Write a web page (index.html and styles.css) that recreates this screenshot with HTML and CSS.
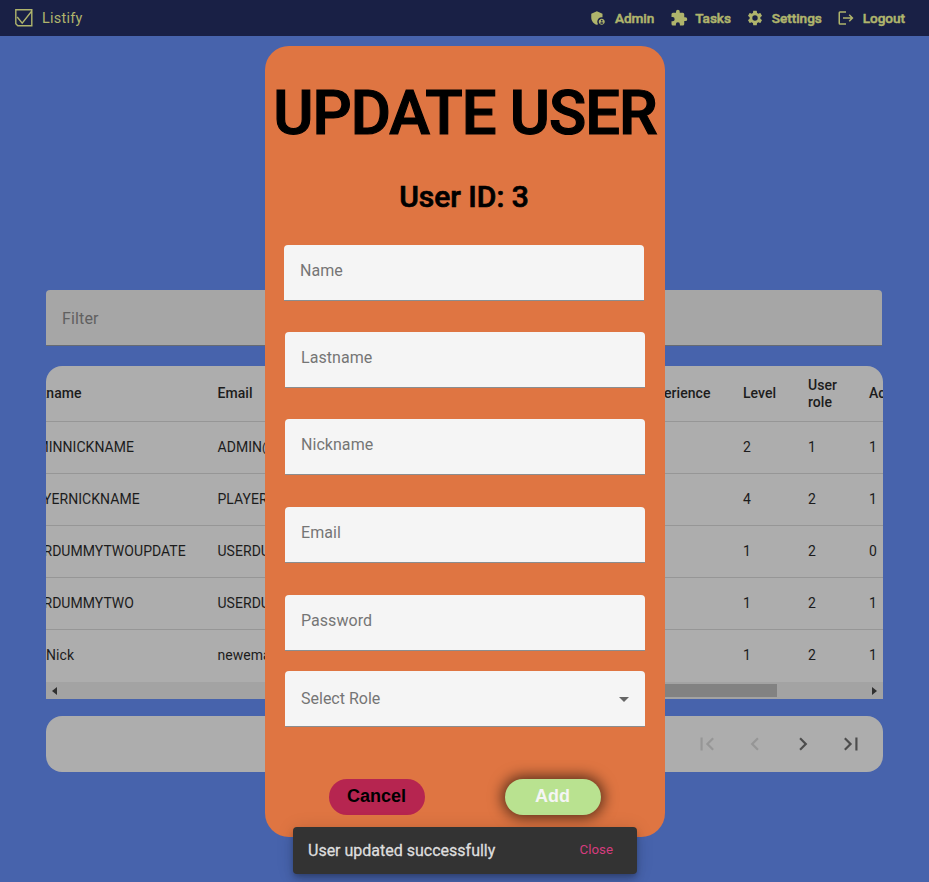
FILE: index.html
```html
<!DOCTYPE html>
<html lang="en">
<head>
<meta charset="utf-8">
<title>Listify</title>
<link rel="stylesheet" href="styles.css">
</head>
<body>
<header class="navbar">
  <a class="brand">
    <svg width="18" height="18" viewBox="0 0 18 18" fill="none" stroke="currentColor" stroke-width="1.4"><path d="M.8.8h16v16H2.800l-2-2zM2.200 8l5 6.200L16.600 2.200"/></svg>
    <span>Listify</span>
  </a>
  <nav class="links">
    <a class="link"><svg viewBox="0 0 24 24"><path d="M17 11c.34 0 .67.04 1 .09V6.270L10.500 3 3 6.270v4.910c0 4.540 3.200 8.790 7.500 9.820.55-.13 1.080-.32 1.600-.55A5.970 5.970 0 0 1 11 17c0-3.310 2.690-6 6-6z"/><path d="M17 13c-2.210 0-4 1.790-4 4s1.790 4 4 4 4-1.790 4-4-1.790-4-4-4zm0 1.380a1.120 1.120 0 1 1 0 2.240 1.120 1.120 0 0 1 0-2.240zm0 5.370c-.93 0-1.740-.46-2.240-1.170.05-.72 1.510-1.080 2.240-1.080s2.190.36 2.240 1.080c-.5.710-1.310 1.170-2.240 1.170z"/></svg><span>Admin</span></a>
    <a class="link"><svg viewBox="0 0 24 24"><path d="M20.500 11H19V7a2 2 0 0 0-2-2h-4V3.500a2.500 2.500 0 0 0-5 0V5H4a2 2 0 0 0-2 2v3.800h1.500a2.700 2.700 0 0 1 0 5.400H2V20a2 2 0 0 0 2 2h3.800v-1.500a2.700 2.700 0 0 1 5.400 0V22H17a2 2 0 0 0 2-2v-4h1.500a2.500 2.500 0 0 0 0-5z"/></svg><span>Tasks</span></a>
    <a class="link"><svg viewBox="0 0 24 24"><path d="M19.140 12.940c.04-.3.06-.61.06-.94 0-.32-.02-.64-.07-.94l2.030-1.580a.49.49 0 0 0 .12-.61l-1.920-3.320a.488.488 0 0 0-.59-.22l-2.390.96c-.5-.38-1.030-.7-1.620-.94l-.36-2.540a.484.484 0 0 0-.48-.41h-3.840c-.24 0-.43.17-.47.41l-.36 2.540c-.59.24-1.130.57-1.620.94l-2.390-.96c-.22-.08-.47 0-.59.22L2.740 8.870c-.12.21-.08.47.12.61l2.030 1.580c-.05.3-.09.63-.09.94s.02.64.07.94l-2.030 1.580a.49.49 0 0 0-.12.61l1.920 3.320c.12.22.37.29.59.22l2.390-.96c.5.38 1.030.7 1.620.94l.36 2.540c.05.24.24.41.48.41h3.840c.24 0 .44-.17.47-.41l.36-2.540c.59-.24 1.130-.56 1.620-.94l2.390.96c.22.08.47 0 .59-.22l1.920-3.320c.12-.22.07-.47-.12-.61l-2.010-1.580zM12 15.600a3.600 3.600 0 1 1 0-7.200 3.600 3.600 0 0 1 0 7.200z"/></svg><span>Settings</span></a>
    <a class="link"><svg viewBox="0 0 24 24"><path d="M17 7l-1.400 1.400 2.600 2.600H8v2h10.200l-2.600 2.600L17 17l5-5zM4 5h8V3H4a2 2 0 0 0-2 2v14a2 2 0 0 0 2 2h8v-2H4z"/></svg><span>Logout</span></a>
  </nav>
</header>

<main class="page">
  <div class="filter">Filter</div>
  <section class="table-box">
    <div class="table">
      <div class="row head"><span>Nickname</span><span>Email</span><span>Experience</span><span>Level</span><span>User role</span><span>Active</span></div>
      <div class="row"><span>ADMINNICKNAME</span><span>ADMIN@MAIL.COM</span><span>10</span><span>2</span><span>1</span><span>1</span></div>
      <div class="row"><span>PLAYERNICKNAME</span><span>PLAYER@MAIL.COM</span><span>304</span><span>4</span><span>2</span><span>1</span></div>
      <div class="row"><span>USERDUMMYTWOUPDATE</span><span>USERDUMMY@MAIL.COM</span><span>0</span><span>1</span><span>2</span><span>0</span></div>
      <div class="row"><span>USERDUMMYTWO</span><span>USERDUMMYTWO@MAIL.COM</span><span>0</span><span>1</span><span>2</span><span>1</span></div>
      <div class="row"><span>NewNick</span><span>newemail@mail.com</span><span>0</span><span>1</span><span>2</span><span>1</span></div>
    </div>
    <div class="scrollbar">
      <i class="arrow left"></i><i class="thumb"></i><i class="arrow right"></i>
    </div>
  </section>
  <section class="paginator">
    <svg class="off" viewBox="0 0 24 24"><path d="M18.410 16.590L13.820 12l4.590-4.590L17 6l-6 6 6 6zM6 6h2v12H6z"/></svg>
    <svg class="off" viewBox="0 0 24 24"><path d="M15.410 7.410L14 6l-6 6 6 6 1.410-1.410L10.830 12z"/></svg>
    <svg viewBox="0 0 24 24"><path d="M10 6L8.590 7.410 13.170 12l-4.580 4.590L10 18l6-6z"/></svg>
    <svg viewBox="0 0 24 24"><path d="M5.590 7.410L10.180 12l-4.590 4.590L7 18l6-6-6-6zM16 6h2v12h-2z"/></svg>
  </section>
</main>

<div class="overlay">
  <form class="dialog">
    <h1>UPDATE USER</h1>
    <h2>User ID: 3</h2>
    <div class="fields">
      <div class="field first">Name</div>
      <div class="field">Lastname</div>
      <div class="field">Nickname</div>
      <div class="field mid">Email</div>
      <div class="field mid">Password</div>
      <div class="field select"><span>Select Role</span><i class="caret"></i></div>
    </div>
    <div class="actions">
      <button type="button" class="btn cancel">Cancel</button>
      <button type="button" class="btn add">Add</button>
    </div>
  </form>
</div>
<div class="snackbar"><span>User updated successfully</span><a>Close</a></div>
</body>
</html>
```
FILE: styles.css
```css
* { box-sizing: border-box; }
body {
  margin: 0;
  height: 882px;
  overflow: hidden;
  position: relative;
  background: #4763ac;
  font-family: Roboto, "Liberation Sans", sans-serif;
}
.navbar {
  height: 36px;
  background: #192045;
  color: #afb46c;
  display: flex;
  justify-content: space-between;
  align-items: center;
  padding: 0 24px 0 15px;
}
.brand { display: flex; align-items: center; gap: 9px; font-size: 14.4px; letter-spacing: 0.25px; }
.links { display: flex; gap: 15.5px; }
.link {
  display: flex;
  align-items: center;
  gap: 7.500px;
  font-size: 13.6px;
  letter-spacing: -0.05px;
  font-weight: 500;
  -webkit-text-stroke: 0.5px currentColor;
}
.link svg { width: 18px; height: 18px; fill: currentColor; }
.page { padding: 254px 46px 0; }
.filter {
  width: 836px;
  height: 56px;
  padding-left: 16px;
  line-height: 57px;
  font-size: 16px;
  letter-spacing: 0.15px;
  color: #606060;
  background: #a6a6a6;
  border-bottom: 1px solid #676b72;
  border-radius: 4px 4px 0 0;
}
.table-box {
  margin-top: 20px;
  height: 333px;
  background: #adadad;
  border-radius: 16px 16px 0 0;
  overflow: hidden;
}
.table { width: 900px; margin-left: -44px; }
.row {
  display: grid;
  grid-template-columns: 199.5px 423.5px 102px 65px 61px 49px;
  align-items: center;
  height: 52px;
  padding: 0 0 2px 16px;
  border-bottom: 1px solid #969696;
  font-size: 14px;
  letter-spacing: 0.04px;
  color: #1c1c1c;
}
.row:last-child { border-bottom: 0; }
.row.head { height: 56px; padding-bottom: 0; line-height: 17px; font-weight: 500; letter-spacing: 0.06px; }
.head span:nth-child(5) { width: 40px; }
.scrollbar {
  height: 17px;
  background: #a3a3a3;
  display: flex;
  align-items: center;
  padding: 0 6px;
}
.arrow { border: 4px solid transparent; }
.arrow.left { border-right: 5px solid #303030; border-left: 0; }
.arrow.right { border-left: 5px solid #303030; border-right: 0; margin-left: auto; }
.thumb { width: 440px; height: 13px; margin-left: 280px; background: #828282; }
.paginator {
  margin-top: 17px;
  width: 837px;
  height: 56px;
  border-radius: 16px;
  background: #adadad;
  display: flex;
  justify-content: flex-end;
  align-items: center;
  gap: 20px;
  padding-right: 18px;
}
.paginator svg { width: 28px; height: 28px; padding: 1px; fill: #4c4c4c; }
.paginator .off { fill: #969696; }

.overlay { position: absolute; inset: 46px 0 auto 265px; width: 400px; }
.dialog {
  height: 791px;
  border-radius: 24px;
  background: #df7542;
  text-align: center;
  overflow: hidden;
}
h1 {
  margin: 34px 0 0;
  font-size: 61.5px;
  line-height: 66px;
  font-weight: 500;
  letter-spacing: -1px;
  white-space: nowrap;
  -webkit-text-stroke: 1.2px #000;
}
h2 {
  margin: 31px 2px 0 0;
  font-size: 30px;
  line-height: 40px;
  font-weight: 500;
  -webkit-text-stroke: 0.7px #000;
}
.fields { padding: 28px 20px 0; text-align: left; }
.field {
  height: 56px;
  margin-bottom: 31px;
  padding: 0 16px;
  line-height: 51px;
  background: #f5f5f5;
  border-bottom: 1px solid #8b8d8f;
  border-radius: 4px 4px 0 0;
  font-size: 16px;
  letter-spacing: 0.05px;
  color: #757575;
}
.field.first { margin-left: -1px; margin-right: 1px; }
.field:nth-child(3) { margin-bottom: 32px; }
.field.mid { margin-bottom: 32px; }
.field.mid + .mid { margin-bottom: 20px; }
.field.select {
  display: flex;
  justify-content: space-between;
  align-items: center;
  line-height: 55px;
  margin: 0;
  letter-spacing: 0;
}
.caret { border: 5px solid transparent; border-top-color: #666; border-bottom: 0; margin-top: 2px; }
.actions { display: flex; justify-content: space-between; padding: 52px 64px 0; }
.btn {
  width: 96px;
  height: 36px;
  border: 0;
  border-radius: 18px;
  padding: 0 1px 2px 0;
  font: bold 18px/34px "Liberation Sans", Arial, sans-serif;
}
.cancel { background: #b62550; color: #000; }
.add { background: #b9e290; color: #f5f5f5; box-shadow: 0 0 14px 3px rgba(0, 0, 0, 0.6); }
.snackbar {
  position: absolute;
  left: 293px;
  top: 827px;
  width: 344px;
  height: 47px;
  padding: 0 24px 0 15px;
  display: flex;
  justify-content: space-between;
  align-items: center;
  background: #333;
  border-radius: 4px;
  box-shadow: 0 3px 5px -1px rgba(0,0,0,.2), 0 6px 10px rgba(0,0,0,.14), 0 1px 18px rgba(0,0,0,.12);
  color: #dedede;
  font-size: 16px;
  -webkit-text-stroke: 0.3px currentColor;
}
.snackbar a { color: #d63c7e; font-size: 13.3px; -webkit-text-stroke: 0; position: relative; top: -1px; }
```
